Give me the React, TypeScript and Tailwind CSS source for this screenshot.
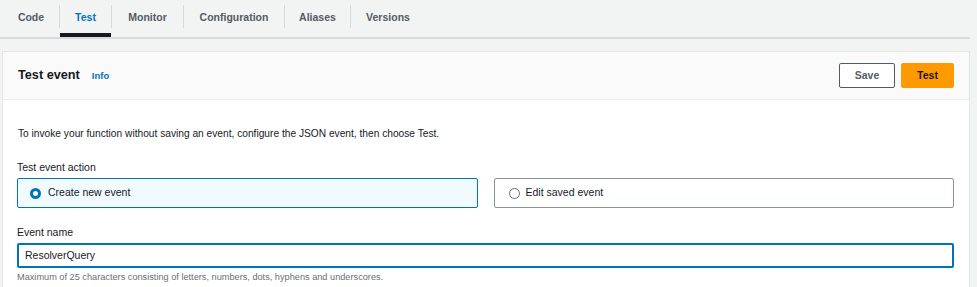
import React from "react";

const tabs = [
  { label: "Code", w: "w-[59px]" },
  { label: "Test", w: "w-[51px]" },
  { label: "Monitor", w: "w-[71px]" },
  { label: "Configuration", w: "w-[100px]" },
  { label: "Aliases", w: "w-[65px]" },
  { label: "Versions", w: "w-[74px]" },
];

function Radio({ checked }: { checked: boolean }) {
  return checked ? (
    <span className="w-[11px] h-[11px] rounded-full border-[3.5px] border-[#0073bb] bg-white shrink-0" />
  ) : (
    <span className="w-[11px] h-[11px] rounded-full border border-[#687078] bg-white shrink-0" />
  );
}

export default function App() {
  return (
    <div
      className="w-[977px] h-[287px] bg-[#f2f3f3] overflow-hidden text-[#16191f]"
      style={{ fontFamily: '"Liberation Sans", Arial, sans-serif' }}
    >
      {/* Tabs */}
      <div className="mr-[7px] border-b-[2px] border-[#d5dbdb] flex h-[39px]">
        {tabs.map((t, i) => (
          <div key={t.label} className="flex items-start h-full">
            {i > 0 && <div className="w-px h-[23px] mt-[5px] bg-[#d5dbdb]" />}
            <div
              className={
                t.w +
                " h-[37px] flex justify-center pt-[11px] text-[10.5px] leading-[12px] font-bold " +
                (t.label === "Test"
                  ? "text-[#0073bb] border-b-[4px] border-[#16191f]"
                  : "text-[#545b64]") +
                (i === 0 ? " pl-[3px]" : "")
              }
            >
              {t.label}
            </div>
          </div>
        ))}
      </div>

      {/* Panel */}
      <div className="mt-[12px] ml-[2px] mr-[7px] bg-white border-l border-r border-t border-[#e4e6e6]">
        <div className="h-[48px] bg-[#fafafa] border-b border-[#eaeded] flex items-center justify-between pl-[15px] pr-[15px]">
          <div className="flex items-baseline gap-[12px]">
            <span className="text-[12.7px] font-bold text-[#16191f]">Test event</span>
            <span className="text-[9.5px] font-bold text-[#0073bb]">Info</span>
          </div>
          <div className="flex items-center gap-[6px]">
            <button className="w-[56px] h-[25px] border border-[#545b64] rounded-[2px] bg-white text-[10.5px] font-bold text-[#545b64]">
              Save
            </button>
            <button className="w-[53px] h-[25px] rounded-[2px] bg-[#ff9900] text-[10.5px] font-bold text-[#16191f]">
              Test
            </button>
          </div>
        </div>

        <div className="pl-[14px] pr-[15px] pt-[27px] pb-[20px]">
          <p className="pl-px text-[10.2px] leading-[14px] text-[#16191f]">
            To invoke your function without saving an event, configure the JSON event, then choose Test.
          </p>

          <div className="mt-[19px] text-[10.5px] leading-[14px]">Test event action</div>
          <div className="mt-[4px] grid grid-cols-2 gap-[16px]">
            <div className="h-[30px] border border-[#0073bb] bg-[#f1faff] rounded-[2px] flex items-center gap-[7px] pl-[12px] text-[10.5px]">
              <Radio checked />
              <span>Create new event</span>
            </div>
            <div className="h-[30px] border border-[#879596] bg-white rounded-[2px] flex items-center gap-[6px] pl-[14px] text-[10.5px]">
              <Radio checked={false} />
              <span>Edit saved event</span>
            </div>
          </div>

          <div className="mt-[17px] text-[10.5px] leading-[14px]">Event name</div>
          <div className="mt-[4px] h-[25px] border-[2px] border-[#0073bb] rounded-[2px] flex items-center pl-[6px] text-[10.5px]">
            ResolverQuery
          </div>
          <div className="mt-[3px] text-[9.2px] leading-[12px] text-[#687078]">
            Maximum of 25 characters consisting of letters, numbers, dots, hyphens and underscores.
          </div>
        </div>
      </div>
    </div>
  );
}
